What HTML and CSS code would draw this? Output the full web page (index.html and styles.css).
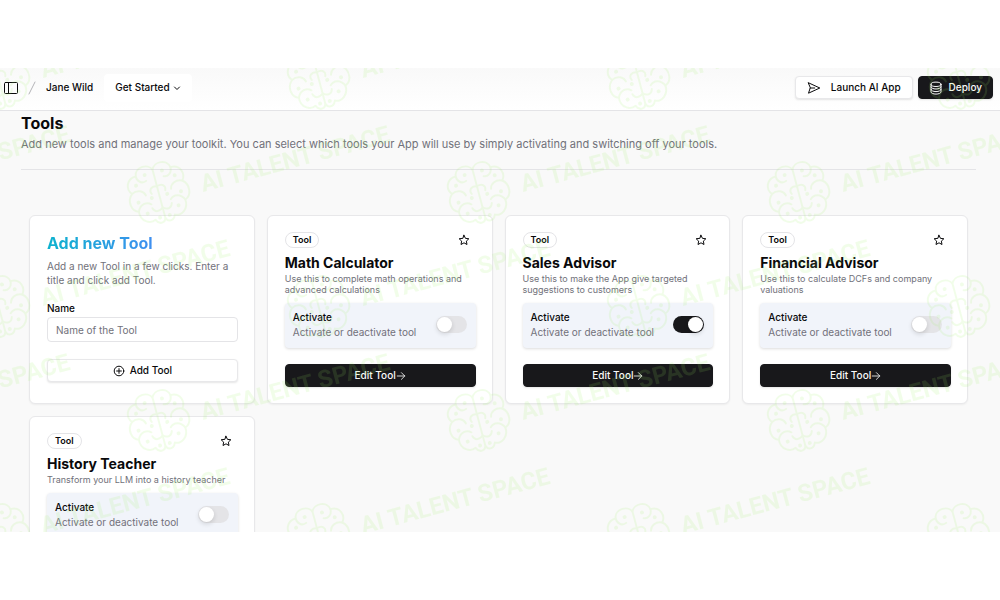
FILE: index.html
```html
<!DOCTYPE html>
<html lang="en">
<head>
<meta charset="utf-8">
<meta name="viewport" content="width=device-width, initial-scale=1">
<title>Tools</title>
<link rel="stylesheet" href="styles.css">
</head>
<body>
<svg class="defs" aria-hidden="true">
  <symbol id="star" viewBox="0 0 24 24"><path d="M12 2.500l2.900 6.200 6.800.800-5 4.700 1.300 6.800-6-3.400-6 3.400 1.300-6.800-5-4.700 6.800-.800z"/></symbol>
  <symbol id="arrow" viewBox="0 0 12 12"><path d="M1.500 6h9M6.500 2 10.500 6 6.500 10"/></symbol>
</svg>
<div class="app">
  <header class="topbar">
    <button class="icon-button" aria-label="Toggle sidebar">
      <svg class="icon-panel" viewBox="0 0 16 14"><rect x="1.500" y="1.500" width="13" height="11" rx="1"/><path d="M5.500 1.500v11"/></svg>
    </button>
    <svg class="slash" viewBox="0 0 8 14" aria-hidden="true"><path d="M7 1 1 13"/></svg>
    <a class="crumb" href="#">Jane Wild</a>
    <button class="menu-button">Get Started
      <svg class="icon-chevron" viewBox="0 0 8 8"><path d="M1.500 3 4 5.500 6.500 3"/></svg>
    </button>
    <div class="actions">
      <button class="button launch">
        <svg class="icon-action" viewBox="0 0 14 14"><path d="M1.500 1.800 12.800 7 1.500 12.200 3.200 7zM3.200 7h4.500"/></svg>
        Launch AI App
      </button>
      <button class="button dark deploy">
        <svg class="icon-action" viewBox="0 0 14 14"><ellipse cx="7" cy="3.300" rx="5" ry="2.200"/><path d="M2 3.300v7.600c0 1.200 2.200 2.200 5 2.200s5-1 5-2.200V3.300M2 5.800C2 7 4.200 8 7 8s5-1 5-2.200M2 8.400c0 1.200 2.200 2.200 5 2.200s5-1 5-2.200"/></svg>
        Deploy
      </button>
    </div>
  </header>
  <main class="content">
    <div class="intro">
      <h1>Tools</h1>
      <p>Add new tools and manage your toolkit. You can select which tools your App will use by simply activating and switching off your tools.</p>
    </div>
    <div class="grid">
      <form class="card">
        <h2 class="add-title">Add new Tool</h2>
        <p class="add-text">Add a new Tool in a few clicks. Enter a title and click add Tool.</p>
        <label class="field-label" for="tool-name">Name</label>
        <input class="field" id="tool-name" type="text" placeholder="Name of the Tool">
        <button class="button wide" type="button">
          <svg class="icon-plus" viewBox="0 0 12 12"><circle cx="6" cy="6" r="4.800"/><path d="M6 3.600v4.800M3.600 6h4.800"/></svg>
          Add Tool
        </button>
      </form>
      <article class="card">
        <div class="card-top"><span class="badge">Tool</span><button class="icon-button" aria-label="Favourite"><svg class="icon-star"><use href="#star"/></svg></button></div>
        <h2>Math Calculator</h2>
        <p class="summary">Use this to complete math operations and advanced calculations</p>
        <div class="activate">
          <label for="math"><span class="activate-name">Activate</span><span class="activate-text">Activate or deactivate tool</span></label>
          <input class="switch" id="math" type="checkbox" role="switch">
        </div>
        <button class="button dark wide">Edit Tool<svg class="icon-arrow"><use href="#arrow"/></svg></button>
      </article>
      <article class="card">
        <div class="card-top"><span class="badge">Tool</span><button class="icon-button" aria-label="Favourite"><svg class="icon-star"><use href="#star"/></svg></button></div>
        <h2>Sales Advisor</h2>
        <p class="summary">Use this to make the App give targeted suggestions to customers</p>
        <div class="activate">
          <label for="sales"><span class="activate-name">Activate</span><span class="activate-text">Activate or deactivate tool</span></label>
          <input class="switch" id="sales" type="checkbox" role="switch" checked>
        </div>
        <button class="button dark wide">Edit Tool<svg class="icon-arrow"><use href="#arrow"/></svg></button>
      </article>
      <article class="card">
        <div class="card-top"><span class="badge">Tool</span><button class="icon-button" aria-label="Favourite"><svg class="icon-star"><use href="#star"/></svg></button></div>
        <h2>Financial Advisor</h2>
        <p class="summary">Use this to calculate DCFs and company valuations</p>
        <div class="activate">
          <label for="finance"><span class="activate-name">Activate</span><span class="activate-text">Activate or deactivate tool</span></label>
          <input class="switch" id="finance" type="checkbox" role="switch">
        </div>
        <button class="button dark wide">Edit Tool<svg class="icon-arrow"><use href="#arrow"/></svg></button>
      </article>
      <article class="card">
        <div class="card-top"><span class="badge">Tool</span><button class="icon-button" aria-label="Favourite"><svg class="icon-star"><use href="#star"/></svg></button></div>
        <h2>History Teacher</h2>
        <p class="summary">Transform your LLM into a history teacher</p>
        <div class="activate">
          <label for="history"><span class="activate-name">Activate</span><span class="activate-text">Activate or deactivate tool</span></label>
          <input class="switch" id="history" type="checkbox" role="switch">
        </div>
      </article>
    </div>
  </main>
  <svg class="watermark" aria-hidden="true">
    <defs>
      <g id="mark">
        <g class="brain" transform="rotate(-15)">
          <path d="M0-25C-3-33-17-32-18-23C-28-23-31-13-26-7C-33-1-31 10-24 12C-25 22-16 27-10 24C-7 31 0 29 0 23C0 29 7 31 10 24C16 27 25 22 24 12C31 10 33-1 26-7C31-13 28-23 18-23C17-32 3-33 0-25zM0-25V23"/>
          <path d="M-18-23C-18-17-13-14-9-16M-26-7C-20-10-14-7-13-2M-24 12C-21 5-14 4-10 8M0-8C-6-10-9-6-7-2M0 14C-5 18-9 16-10 12M18-23C18-17 13-14 9-16M26-7C20-10 14-7 13-2M24 12C21 5 14 4 10 8M0-8C6-10 9-6 7-2M0 14C5 18 9 16 10 12"/>
          <path class="dots" d="M-9-22h0M-20-14h0M-22 3h0M-8 2h0M-16 16h0M-5 23h0M9-22h0M20-14h0M22 3h0M8 2h0M16 16h0M5 23h0"/>
        </g>
        <text transform="translate(44 -2) rotate(-15)">AI TALENT SPACE</text>
      </g>
    </defs>
    <use href="#mark" x="-1" y="12"/><use href="#mark" x="319" y="12"/><use href="#mark" x="639" y="12"/><use href="#mark" x="959" y="12"/>
    <use href="#mark" x="-161" y="126"/><use href="#mark" x="159" y="126"/><use href="#mark" x="479" y="126"/><use href="#mark" x="799" y="126"/>
    <use href="#mark" x="-1" y="240"/><use href="#mark" x="319" y="240"/><use href="#mark" x="639" y="240"/><use href="#mark" x="959" y="240"/>
    <use href="#mark" x="-161" y="354"/><use href="#mark" x="159" y="354"/><use href="#mark" x="479" y="354"/><use href="#mark" x="799" y="354"/>
    <use href="#mark" x="-1" y="468"/><use href="#mark" x="319" y="468"/><use href="#mark" x="639" y="468"/><use href="#mark" x="959" y="468"/>
  </svg>
</div>
</body>
</html>
```

FILE: styles.css
```css
* { box-sizing: border-box; }
body {
  margin: 0;
  padding: 68px 0;
  height: 100vh;
  background: #fff;
  color: #09090b;
  font: 10px/15px Inter, "Liberation Sans", sans-serif;
}
h1, h2, p { margin: 0; }
button, input { font: inherit; color: inherit; }
button { cursor: pointer; }
svg { fill: none; stroke: currentColor; stroke-linecap: round; stroke-linejoin: round; }
.defs { display: none; }
.app { position: relative; height: 100%; overflow: hidden; background: #f9f9f9; }

.topbar {
  display: flex;
  align-items: center;
  height: 43px;
  padding: 0 7px 3px 3px;
  border-bottom: 1px solid #e4e4e7;
  background: linear-gradient(#f9f9f9, #fff);
  font-weight: 500;
}
.icon-button { display: flex; padding: 0; border: 0; background: none; }
.icon-panel { width: 16px; height: 14px; }
.slash { width: 8px; height: 14px; margin: 0 10px 0 9px; color: #b4b4b8; }
.crumb { color: inherit; text-decoration: none; }
.menu-button {
  display: flex;
  align-items: center;
  gap: 3px;
  height: 28px;
  margin-left: 11px;
  padding: 0 11px;
  border: 0;
  border-radius: 4px;
  background: #fff;
  font-weight: 500;
}
.icon-chevron { width: 8px; height: 8px; }
.actions { display: flex; gap: 5px; margin-left: auto; }
.button {
  display: flex;
  align-items: center;
  justify-content: center;
  height: 23px;
  border: 1px solid #e8e8ea;
  border-radius: 4px;
  background: #fff;
  box-shadow: 0 1px 2px rgb(0 0 0 / 10%);
  font-weight: 500;
}
.dark { border-color: #18181b; background: #18181b; color: #fafafa; }
.launch { gap: 10px; padding: 0 11px; }
.deploy { gap: 6px; padding: 0 10px; }
.icon-action { width: 14px; height: 14px; }

.intro { margin: 0 24px 0 21px; padding: 2px 0 17px; border-bottom: 1px solid #e4e4e7; }
h1 { font-size: 16px; line-height: 20px; font-weight: 700; }
.intro p { padding-top: 3px; color: #71717a; font-size: 11px; line-height: 16px; }
.grid {
  display: grid;
  grid-template-columns: repeat(4, minmax(0, 1fr));
  gap: 12px;
  padding: 45px 32px 12px 29px;
}
.card {
  padding: 16px 16px 16px 17px;
  border: 1px solid #e8e8ea;
  border-radius: 6px;
  background: #fff;
  box-shadow: 0 1px 2px rgb(0 0 0 / 5%);
}
.add-title {
  width: max-content;
  background: linear-gradient(90deg, #0eb2ce, #3f8ff0);
  background-clip: text;
  color: transparent;
  font-size: 16px;
  line-height: 22px;
}
.add-text { margin-top: 5px; color: #71717a; line-height: 14px; }
.field-label { display: block; margin-top: 14px; font-weight: 500; }
.field {
  width: 100%;
  height: 25px;
  margin-top: 1px;
  padding: 0 8px;
  border: 1px solid #e4e4e7;
  border-radius: 4px;
  background: #fff;
}
.field::placeholder { color: #71717a; opacity: 1; }
.wide { width: 100%; margin-top: 16px; }
.field + .wide { margin-top: 17px; }
.icon-plus { width: 12px; height: 12px; margin-right: 5px; }
.card-top { display: flex; align-items: center; justify-content: space-between; padding-right: 6px; }
.badge {
  padding: 0 7px;
  border: 1px solid #e4e4e7;
  border-radius: 8px;
  font-size: 9px;
  line-height: 14px;
  font-weight: 600;
}
.icon-star { width: 12px; height: 12px; stroke-width: 2; }
.card h2:not(.add-title) { margin-top: 5px; font-size: 14px; line-height: 20px; font-weight: 700; }
.summary { color: #71717a; font-size: 9px; line-height: 11px; }
.activate {
  display: flex;
  align-items: center;
  justify-content: space-between;
  height: 45px;
  margin-top: 8px;
  padding: 0 9px 2px 8px;
  border-radius: 4px;
  background: #f1f4fa;
  box-shadow: 0 1px 3px rgb(0 0 0 / 14%);
}
.activate-name, .activate-text { display: block; }
.activate-name { font-weight: 500; }
.activate-text { color: #71717a; }
.switch {
  appearance: none;
  display: flex;
  width: 31px;
  height: 17px;
  margin: 0;
  padding: 1px;
  border-radius: 9px;
  background: #e4e4e7;
}
.switch::before {
  content: "";
  width: 15px;
  height: 15px;
  border-radius: 50%;
  background: #fff;
  box-shadow: 0 2px 5px rgb(0 0 0 / 14%);
}
.switch:checked { justify-content: flex-end; background: #18181b; }
.icon-arrow { width: 10px; height: 10px; }

.watermark {
  position: absolute;
  inset: 0;
  width: 100%;
  height: 100%;
  pointer-events: none;
  color: #9cf060;
  opacity: 0.13;
}
.brain { stroke-width: 2; }
.dots { stroke-width: 4; }
.watermark text {
  fill: currentColor;
  stroke: none;
  font: 700 24px Roboto, sans-serif;
}
```
